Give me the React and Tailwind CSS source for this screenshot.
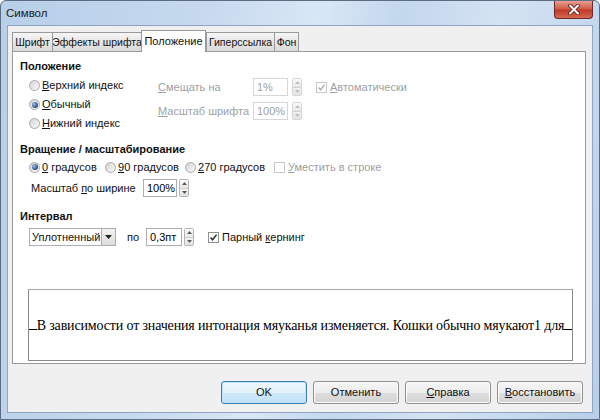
import React from "react";

function Radio({ checked }) {
  return (
    <span className="inline-flex items-center justify-center w-[11px] h-[11px] rounded-full border border-[#a9a9a9] bg-[linear-gradient(135deg,#d4d4d4,#fafafa)] shrink-0">
      {checked && (
        <span className="w-[6px] h-[6px] rounded-full bg-[radial-gradient(circle_at_35%_35%,#9fc0ea,#254a80_70%)]" />
      )}
    </span>
  );
}

function Check({ checked, disabled }) {
  return (
    <span
      className={
        "inline-flex items-center justify-center w-[11px] h-[11px] border shrink-0 bg-white " +
        (disabled ? "border-[#c8c8c8]" : "border-[#8e8f8f]")
      }
    >
      {checked && (
        <svg width="9" height="9" viewBox="0 0 9 9">
          <path
            d="M1.5 4.5 L3.6 6.8 L7.6 1.6"
            fill="none"
            stroke={disabled ? "#b0b0b0" : "#2c2c2c"}
            strokeWidth="1.5"
          />
        </svg>
      )}
    </span>
  );
}

function Spinner({ disabled }) {
  const c = disabled ? "#c0c0c0" : "#5a5a5a";
  return (
    <div
      className={
        "flex flex-col w-[10px] h-[18px] border rounded-[2px] overflow-hidden shrink-0 " +
        (disabled ? "border-[#d6d6d6]" : "border-[#b4b4b4]")
      }
    >
      <div className="flex-1 flex items-center justify-center bg-[linear-gradient(#fbfbfb,#e8e8e8)] border-b border-[#d0d0d0]">
        <svg width="5" height="3" viewBox="0 0 5 3">
          <path d="M0 3 L2.5 0 L5 3 Z" fill={c} />
        </svg>
      </div>
      <div className="flex-1 flex items-center justify-center bg-[linear-gradient(#f2f2f2,#e2e2e2)]">
        <svg width="5" height="3" viewBox="0 0 5 3">
          <path d="M0 0 L2.5 3 L5 0 Z" fill={c} />
        </svg>
      </div>
    </div>
  );
}

function SpinInput({ value, w, disabled, gap }) {
  return (
    <div className="flex items-center shrink-0">
      <div
        className={
          "h-[18px] border bg-white pl-[3px] leading-[16px] shrink-0 " +
          (disabled ? "border-[#d6d6d6] text-[#a0a0a0]" : "border-[#abadb3] text-black")
        }
        style={{ width: w }}
      >
        {value}
      </div>
      <div style={{ marginLeft: gap }}>
        <Spinner disabled={disabled} />
      </div>
    </div>
  );
}

function Tab({ label, w, selected }) {
  if (selected)
    return (
      <div
        className="relative z-10 h-[22px] -mb-[1px] bg-white border border-b-0 border-[#9a9a9a] flex items-start justify-center pt-[2px] leading-[17px] shrink-0"
        style={{ width: w }}
      >
        {label}
      </div>
    );
  return (
    <div
      className="h-[19px] border-t border-l border-r border-[#9a9a9a] -mr-[1px] bg-[linear-gradient(#f6f6f6,#e6e6e6_50%,#dadada)] flex items-center justify-center leading-[17px] shrink-0 text-[10.5px]"
      style={{ width: w }}
    >
      {label}
    </div>
  );
}

function Btn({ children, focused }) {
  return (
    <div
      className={
        "w-[86px] h-[23px] rounded-[3px] border flex items-center justify-center " +
        (focused
          ? "border-[#3c7fb1] bg-[linear-gradient(#eef7fd,#e2f1fc_50%,#cfe8fa_51%,#c2e1f8)] shadow-[inset_0_0_0_1px_#bfe3fb]"
          : "border-[#8e8f8f] bg-[linear-gradient(#f6f6f6,#ececec_50%,#dedede_51%,#d3d3d3)] shadow-[inset_0_0_0_1px_#fcfcfc]")
      }
    >
      {children}
    </div>
  );
}

export default function App() {
  return (
    <div className="w-[600px] h-[420px] flex flex-col whitespace-nowrap font-['Liberation_Sans',Arial,sans-serif] text-[11px] text-[#111] bg-[linear-gradient(100deg,#b7cfe9_0%,#c6d9ee_30%,#d9e7f5_48%,#c3d7ed_60%,#d4e3f3_75%,#b8cfe9_100%)] border border-[#5d6c80] rounded-t-[6px] overflow-hidden">
      {/* Title bar */}
      <div className="h-[24px] flex items-start justify-between shrink-0">
        <div className="pl-[5px] pt-[4px] text-[11.5px] leading-[16px] text-[#1b1b1b]">Символ</div>
        <div className="mr-[6px] w-[39px] h-[18px] rounded-b-[4px] border border-t-0 border-[#6b2a2a] bg-[linear-gradient(#e8a193,#d25a48_45%,#c03a28_55%,#d86a4e)] flex items-center justify-center">
          <svg width="12" height="11" viewBox="0 0 12 11">
            <path d="M2 1.5 L10 9.5 M10 1.5 L2 9.5" stroke="#5a1a14" strokeWidth="3.6" strokeLinecap="round" />
            <path d="M2 1.5 L10 9.5 M10 1.5 L2 9.5" stroke="#ffffff" strokeWidth="2" strokeLinecap="round" />
          </svg>
        </div>
      </div>

      {/* Client area */}
      <div className="mx-[6px] mb-[6px] flex-1 bg-[#f0f0f0] border border-[#8ea4c0] flex flex-col pt-[4px] pl-[4px] pr-[6px]">
        {/* Tabs */}
        <div className="flex items-end h-[21px]">
          <Tab label="Шрифт" w={41} />
          <Tab label="Эффекты шрифта" w={90} />
          <Tab label="Положение" w={65} selected />
          <Tab label="Гиперссылка" w={69} />
          <Tab label="Фон" w={25} />
        </div>

        {/* Panel */}
        <div className="h-[313px] bg-white border border-[#9a9a9a] pl-[7px] flex flex-col">
          {/* Section 1 */}
          <div className="mt-[6px] h-[17px] leading-[17px] font-bold">Положение</div>
          <div className="flex mt-[1px]">
            <div className="w-[138px] shrink-0 flex flex-col pl-[9px]">
              <div className="h-[19px] flex items-center gap-[2px]">
                <Radio />
                <span><u>В</u>ерхний индекс</span>
              </div>
              <div className="h-[19px] flex items-center gap-[2px]">
                <Radio checked />
                <span><u>О</u>бычный</span>
              </div>
              <div className="h-[19px] flex items-center gap-[2px]">
                <Radio />
                <span><u>Н</u>ижний индекс</span>
              </div>
            </div>
            <div className="flex flex-col mt-[2px] text-[#a0a0a0]">
              <div className="h-[18px] flex items-center">
                <span className="w-[95px] shrink-0"><u>С</u>мещать на</span>
                <SpinInput value="1%" w={35} disabled gap={4} />
                <span className="ml-[14px] flex items-center gap-[3px]">
                  <Check checked disabled />
                  <span><u>А</u>втоматически</span>
                </span>
              </div>
              <div className="h-[18px] mt-[6px] flex items-center">
                <span className="w-[95px] shrink-0"><u>М</u>асштаб шрифта</span>
                <SpinInput value="100%" w={35} disabled gap={4} />
              </div>
            </div>
          </div>

          {/* Section 2 */}
          <div className="mt-[8px] h-[17px] leading-[17px] font-bold">Вращение / масштабирование</div>
          <div className="h-[18px] flex items-center pl-[9px]">
            <div className="w-[76px] shrink-0 flex items-center gap-[2px]">
              <Radio checked />
              <span><u>0</u> градусов</span>
            </div>
            <div className="w-[80px] shrink-0 flex items-center gap-[2px]">
              <Radio />
              <span><u>9</u>0 градусов</span>
            </div>
            <div className="w-[89px] shrink-0 flex items-center gap-[2px]">
              <Radio />
              <span><u>2</u>70 градусов</span>
            </div>
            <div className="flex items-center gap-[3px] text-[#a0a0a0]">
              <Check disabled />
              <span><u>У</u>местить в строке</span>
            </div>
          </div>
          <div className="h-[18px] mt-[3px] flex items-center pl-[11px]">
            <span className="w-[112px] shrink-0">Масштаб <u>п</u>о ширине</span>
            <SpinInput value="100%" w={34} gap={2} />
          </div>

          {/* Section 3 */}
          <div className="mt-[11px] h-[17px] leading-[17px] font-bold">Интервал</div>
          <div className="h-[18px] mt-[3px] flex items-center pl-[9px]">
            <div className="w-[87px] shrink-0 h-[18px] border border-[#abadb3] bg-white flex">
              <span className="flex-1 pl-[2px] leading-[16px]">Уплотненный</span>
              <span className="w-[14px] h-[16px] border-l border-[#abadb3] bg-[linear-gradient(#f4f4f4,#dcdcdc)] flex items-center justify-center">
                <svg width="7" height="4" viewBox="0 0 7 4">
                  <path d="M0 0 L3.5 4 L7 0 Z" fill="#222" />
                </svg>
              </span>
            </div>
            <span className="ml-[11px] w-[19px] shrink-0">по</span>
            <SpinInput value="0,3пт" w={36} gap={2} />
            <span className="ml-[14px] flex items-center gap-[3px]">
              <Check checked />
              <span>Парный <u>к</u>ернинг</span>
            </span>
          </div>

          {/* Preview */}
          <div className="mt-[43px] ml-[8px] w-[545px] h-[72px] border border-[#8a8a8a] border-t-[#a8a8a8] flex items-center">
            <div className="w-full flex items-baseline font-['Liberation_Serif',serif] text-[14px] tracking-[-0.15px] text-black pt-[1px]">
              <span className="flex-1 border-b border-black" />
              <span className="whitespace-nowrap">В зависимости от значения интонация мяуканья изменяется. Кошки обычно мяукают1 для</span>
              <span className="flex-1 border-b border-black" />
            </div>
          </div>
        </div>

        {/* Buttons */}
        <div className="mt-[17px] flex justify-end gap-[6px] pr-[3px]">
          <Btn focused>OK</Btn>
          <Btn>Отменить</Btn>
          <Btn><span><u>С</u>правка</span></Btn>
          <Btn><span><u>В</u>осстановить</span></Btn>
        </div>
      </div>
    </div>
  );
}
